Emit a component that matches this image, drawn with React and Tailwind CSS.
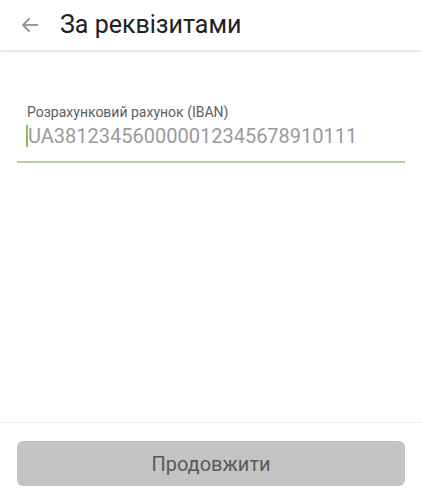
import React from "react";

export default function App() {
  return (
    <div className="w-[422px] h-[500px] bg-white flex flex-col" style={{ fontFamily: "Roboto, 'Noto Sans', sans-serif" }}>
      <div className="h-[50px] flex items-center shadow-[0_1px_3px_rgba(0,0,0,0.18)] relative z-10">
        <div className="w-[60px] flex items-center pl-[21px]">
          <svg width="18" height="16" viewBox="0 0 18 16" fill="none" stroke="#919191" strokeWidth="1.8">
            <path d="M17 8H2" />
            <path d="M8.5 1.5L2 8l6.5 6.5" />
          </svg>
        </div>
        <div className="text-[25px] leading-none text-[#212121] -mt-[2px]">За реквізитами</div>
      </div>
      <div className="flex-1 flex flex-col px-[17px] pt-[54px]">
        <div className="text-[14px] leading-[16px] text-[#5e5e5e] pl-[10px]">Розрахунковий рахунок (IBAN)</div>
        <div className="flex items-center pl-[9px] mt-[4px] h-[24px]">
          <div className="w-[2px] h-[22px] bg-[#8cc04f]" />
          <div className="text-[20px] leading-none text-[#9b9b9b]">UA381234560000012345678910111</div>
        </div>
        <div className="mt-[13px] h-[2px] bg-[#b5d494]" />
      </div>
      <div className="h-px bg-[#eeeeee]" />
      <div className="px-[17px] pt-[18px] pb-[14px]">
        <div className="h-[45px] rounded-[6px] bg-[#c4c4c4] flex items-center justify-center text-[20px] text-[#595959]">Продовжити</div>
      </div>
    </div>
  );
}
